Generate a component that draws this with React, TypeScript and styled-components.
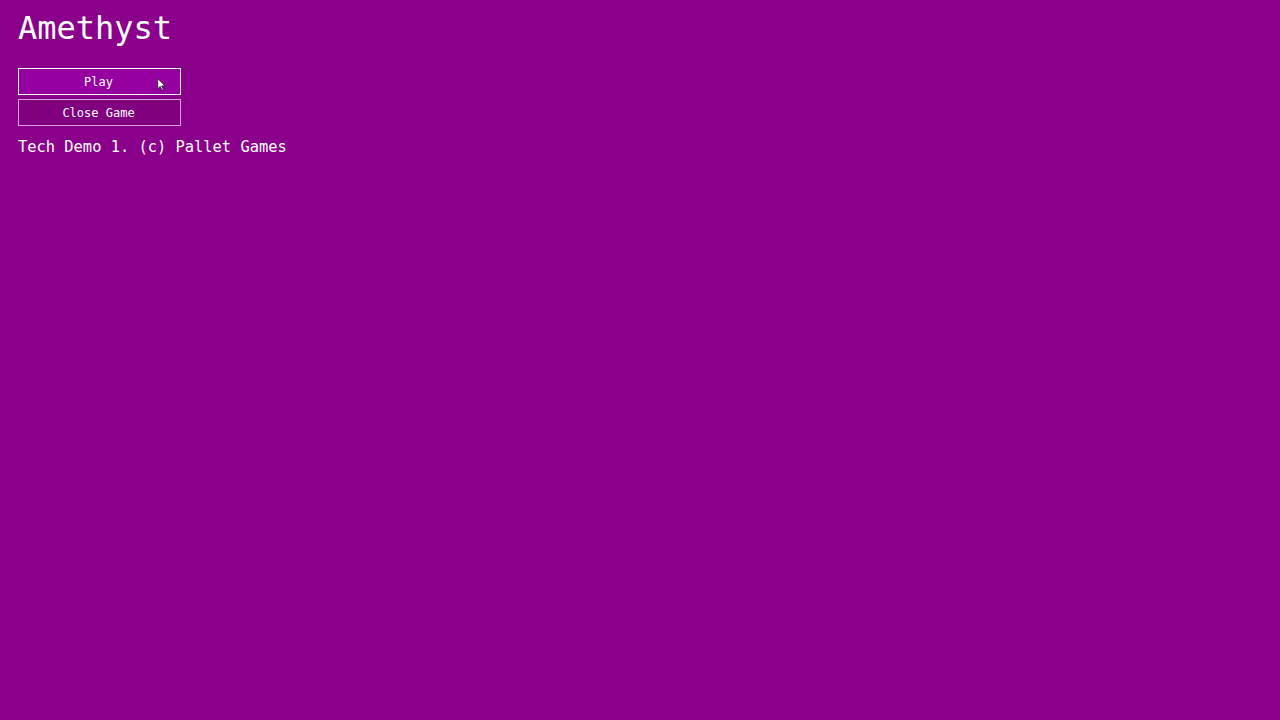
import React from "react";
import styled, { createGlobalStyle } from "styled-components";

const GlobalStyle = createGlobalStyle`
  html, body {
    margin: 0;
    padding: 0;
    background: #8b008b;
  }
`;

const App = () => {
  return (
    <>
      <GlobalStyle />
      <Screen>
        <Title>Amethyst</Title>
        <Menu>
          <MenuButton $hover>
            Play
            <Cursor viewBox="0 0 8 12">
              <path d="M0.5 0.5 L0.5 10 L2.8 7.8 L4.4 11.4 L5.8 10.8 L4.2 7.3 L7.3 7.3 Z" fill="#fff" stroke="#222" strokeWidth="0.8" />
            </Cursor>
          </MenuButton>
          <MenuButton>Close Game</MenuButton>
        </Menu>
        <Footer>Tech Demo 1. (c) Pallet Games</Footer>
      </Screen>
    </>
  );
};

const Screen = styled.div`
  display: flex;
  flex-direction: column;
  align-items: flex-start;
  width: 1280px;
  height: 720px;
  padding: 8px 18px;
  box-sizing: border-box;
  background: #8b008b;
  color: #fff;
  font-family: "DejaVu Sans Mono", "Liberation Mono", monospace;
`;

const Title = styled.h1`
  margin: 0;
  font-size: 32px;
  font-weight: 400;
  line-height: 40px;
`;

const Menu = styled.div`
  display: flex;
  flex-direction: column;
  gap: 4px;
  margin-top: 20px;
`;

const MenuButton = styled.div<{ $hover?: boolean }>`
  position: relative;
  display: flex;
  align-items: center;
  justify-content: center;
  width: 163px;
  height: 27px;
  padding-right: 2px;
  box-sizing: border-box;
  border: 1px solid ${(p) => (p.$hover ? "#ffffff" : "#d9a0d9")};
  background: ${(p) => (p.$hover ? "#9700a0" : "#800080")};
  font-size: 12px;
`;

const Cursor = styled.svg`
  position: absolute;
  left: 138px;
  top: 9px;
  width: 9px;
  height: 13px;
`;

const Footer = styled.div`
  margin-top: 11px;
  font-size: 15.4px;
  line-height: 20px;
`;

export default App;
